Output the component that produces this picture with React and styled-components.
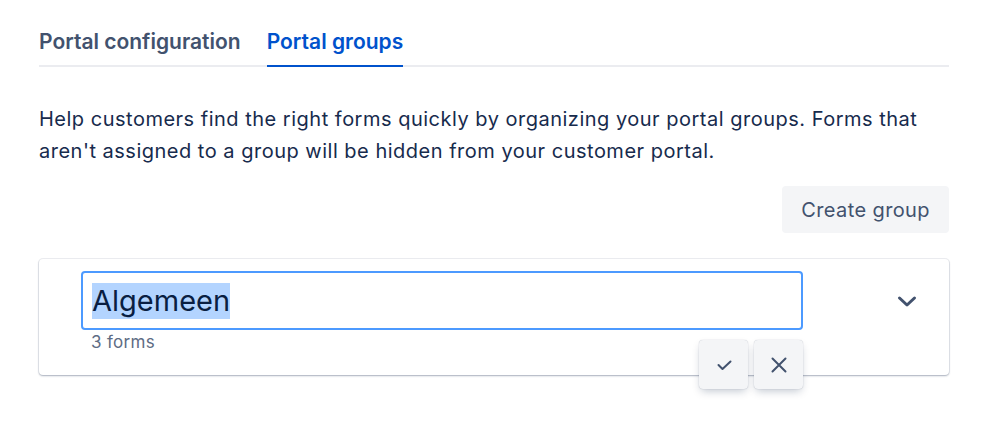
import React from 'react';
import styled, { createGlobalStyle } from 'styled-components';

const GlobalStyle = createGlobalStyle`
	body {
		margin: 0;
		min-height: 100vh;
		background: #fff;
		font-family: Inter, "Noto Sans", "Liberation Sans", sans-serif;
		color: #172B4D;
	}
`;

const Page = styled.div`
	width: 910px;
	padding: 28px 0 60px 39px;
`;

const TabList = styled.div`
	display: flex;
	gap: 26px;
	box-shadow: inset 0 -2px 0 #EBECF0;
`;

const Tab = styled.div`
	font-size: 21px;
	font-weight: 600;
	line-height: 28px;
	padding-bottom: 11px;
	color: ${({ active }) => (active ? '#0052CC' : '#42526E')};
	box-shadow: ${({ active }) => (active ? 'inset 0 -2px 0 #0052CC' : 'none')};
`;

const Description = styled.p`
	margin: 36px 0 0;
	font-size: 20px;
	line-height: 32px;
	letter-spacing: 0.5px;
	color: #172B4D;
`;

const Toolbar = styled.div`
	display: flex;
	justify-content: flex-end;
	margin-top: 19px;
`;

const Button = styled.button`
	height: 47px;
	padding: 0 19px;
	border: none;
	border-radius: 4px;
	background: #F4F5F7;
	color: #42526E;
	font-family: inherit;
	font-size: 20px;
	letter-spacing: 0.4px;
`;

const Card = styled.div`
	position: relative;
	margin-top: 26px;
	padding: 12px 26px 23px 42px;
	border-radius: 4px;
	background: #fff;
	box-shadow: 0 0 0 1px rgba(9, 30, 66, 0.07), 0 1px 2px rgba(9, 30, 66, 0.3);
	display: flex;
	align-items: flex-start;
`;

const Main = styled.div`
	position: relative;
	width: 722px;
`;

const NameField = styled.div`
	box-sizing: border-box;
	height: 59px;
	display: flex;
	align-items: center;
	padding: 0 9px;
	border: 2px solid #4C9AFF;
	border-radius: 4px;
	font-size: 29px;
	color: #091E42;
`;

const Selected = styled.span`
	background: #B3D4FF;
	line-height: 36px;
`;

const Meta = styled.div`
	margin-top: 2px;
	padding-left: 10px;
	font-size: 17px;
	line-height: 20px;
	letter-spacing: 0.3px;
	color: #5E6C84;
`;

const Actions = styled.div`
	position: absolute;
	right: 0;
	top: 69px;
	display: flex;
	gap: 6px;
	z-index: 1;
`;

const ActionButton = styled.button`
	width: 49px;
	height: 49px;
	display: flex;
	align-items: center;
	justify-content: center;
	padding: 0;
	border: none;
	border-radius: 4px;
	background: #F4F5F7;
	box-shadow: 0 4px 8px -2px rgba(9, 30, 66, 0.25), 0 0 1px rgba(9, 30, 66, 0.31);
	color: #42526E;
`;

const ToggleButton = styled.button`
	margin: 14px 0 0 auto;
	width: 32px;
	height: 32px;
	display: flex;
	align-items: center;
	justify-content: center;
	padding: 0;
	border: none;
	background: transparent;
	color: #42526E;
`;

const CheckIcon = () => (
	<svg width="24" height="24" viewBox="0 0 24 24" fill="none">
		<polyline points="6.5 12 10.5 16 18.5 8.5" stroke="currentColor" strokeWidth="2" strokeLinecap="round" strokeLinejoin="round" />
	</svg>
);

const CrossIcon = () => (
	<svg width="24" height="24" viewBox="0 0 24 24" fill="none">
		<path d="M5.5 5.5l13 13M18.5 5.5l-13 13" stroke="currentColor" strokeWidth="2" strokeLinecap="round" />
	</svg>
);

const ChevronIcon = () => (
	<svg width="24" height="24" viewBox="0 0 24 24" fill="none">
		<polyline points="4.5 9 12 16 19.5 9" stroke="currentColor" strokeWidth="3" strokeLinecap="round" strokeLinejoin="round" />
	</svg>
);

export default function App() {
	return (
		<Page>
			<GlobalStyle />
			<TabList>
				<Tab>Portal configuration</Tab>
				<Tab active>Portal groups</Tab>
			</TabList>
			<Description>
				Help customers find the right forms quickly by organizing your portal groups. Forms that
				aren't assigned to a group will be hidden from your customer portal.
			</Description>
			<Toolbar>
				<Button>Create group</Button>
			</Toolbar>
			<Card>
				<Main>
					<NameField>
						<Selected>Algemeen</Selected>
					</NameField>
					<Meta>3 forms</Meta>
					<Actions>
						<ActionButton><CheckIcon /></ActionButton>
						<ActionButton><CrossIcon /></ActionButton>
					</Actions>
				</Main>
				<ToggleButton><ChevronIcon /></ToggleButton>
			</Card>
		</Page>
	);
}
